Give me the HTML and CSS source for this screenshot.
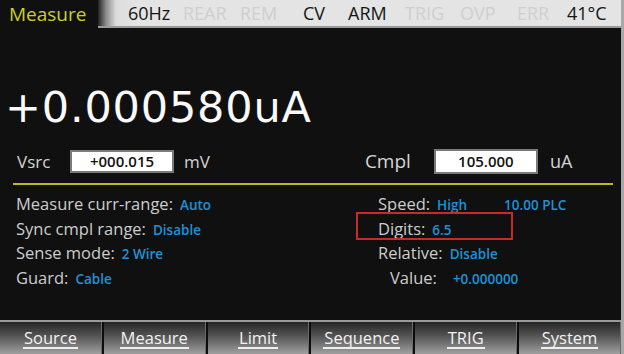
FILE: index.html
```html
<!DOCTYPE html>
<html lang="en">
<head>
    <meta charset="UTF-8">
    <title>Measure</title>
    <link rel="stylesheet" href="styles.css">
</head>
<body>
  <div class="screen">

    <header class="topbar">
      <div class="mode">Measure</div>
      <div class="status">
        <span class="flag on hz">60Hz</span>
        <span class="flag off rear">REAR</span>
        <span class="flag off rem">REM</span>
        <span class="flag on cv">CV</span>
        <span class="flag on arm">ARM</span>
        <span class="flag off trig">TRIG</span>
        <span class="flag off ovp">OVP</span>
        <span class="flag off err">ERR</span>
        <span class="flag on temp">41°C</span>
      </div>
    </header>

    <div class="reading">+0.000580uA</div>

    <div class="setpoints">
      <div class="setpoint">
        <span class="sp-label">Vsrc</span>
        <span class="sp-box">+000.015</span>
        <span class="sp-unit">mV</span>
      </div>
      <div class="setpoint cmpl">
        <span class="sp-label">Cmpl</span>
        <span class="sp-box">105.000</span>
        <span class="sp-unit">uA</span>
      </div>
    </div>

    <div class="divider"></div>

    <div class="info">
      <div class="info-col">
        <div class="row"><span class="key">Measure curr-range:</span><span class="val">Auto</span></div>
        <div class="row"><span class="key">Sync cmpl range:</span><span class="val">Disable</span></div>
        <div class="row"><span class="key">Sense mode:</span><span class="val">2 Wire</span></div>
        <div class="row"><span class="key">Guard:</span><span class="val">Cable</span></div>
      </div>
      <div class="info-col right">
        <div class="row"><span class="key">Speed:</span><span class="val">High</span><span class="val plc">10.00 PLC</span></div>
        <div class="row marked"><span class="key">Digits:</span><span class="val">6.5</span></div>
        <div class="row"><span class="key">Relative:</span><span class="val">Disable</span></div>
        <div class="row indent"><span class="key">Value:</span><span class="val">+0.000000</span></div>
      </div>
    </div>

    <nav class="softkeys">
      <div class="key-btn"><span>Source</span></div>
      <div class="key-btn"><span>Measure</span></div>
      <div class="key-btn"><span>Limit</span></div>
      <div class="key-btn"><span>Sequence</span></div>
      <div class="key-btn"><span>TRIG</span></div>
      <div class="key-btn"><span>System</span></div>
    </nav>

  </div>
</body>
</html>
```

FILE: styles.css
```css
body {
    margin: 0;
    background: #111;
    font-family: "Open Sans", sans-serif;
}

.screen {
    width: 621px;
    height: 354px;
    background: #101010;
    border-right: 3px solid #a8a8a8;
    display: flex;
    flex-direction: column;
    overflow: hidden;
}

/* top status strip */
.topbar {
    display: flex;
    height: 29px;
    flex-shrink: 0;
}

.mode {
    width: 89px;
    padding-left: 9px;
    color: #c9cf2e;
    font-size: 19px;
    line-height: 29px;
}

.status {
    flex: 1;
    position: relative;
    height: 26px;
    background: linear-gradient(to right, #222 0px, #8a8a8a 8px, #dcdcdc 18px, #e4e4e4 40px);
    border-bottom: 2px solid #9a9a9a;
    font-size: 18px;
    line-height: 28px;
}

.flag {
    position: absolute;
    top: -1px;
}
.flag.on { color: #151515; }
.flag.off { color: #cfcfcf; }

.hz { left: 30px; }
.rear { left: 85px; }
.rem { left: 142px; }
.cv { left: 205px; }
.arm { left: 250px; }
.trig { left: 307px; }
.ovp { left: 362px; }
.err { left: 419px; }
.temp { left: 469px; }

/* main reading */
.reading {
    margin-top: 54px;
    padding-left: 5px;
    color: #fafafa;
    font-family: "DejaVu Sans", sans-serif;
    font-size: 43px;
    line-height: 48px;
    letter-spacing: 0.8px;
}

.setpoints {
    display: flex;
    margin-top: 18px;
    height: 24px;
}

.setpoint {
    display: flex;
    align-items: center;
    color: #d4d4d4;
    font-size: 17px;
}

.setpoint .sp-label {
    width: 53px;
    padding-left: 17px;
}

.sp-box {
    box-sizing: border-box;
    width: 104px;
    height: 23px;
    background: #fff;
    border: 2px solid #7a7a7a;
    color: #111;
    font-size: 15px;
    font-weight: 600;
    text-align: center;
    line-height: 19px;
}

.sp-unit {
    margin-left: 10px;
}

.setpoint.cmpl {
    margin-left: 155px;
    font-size: 19px;
}
.setpoint.cmpl .sp-label {
    width: 69px;
    padding-left: 0;
}
.setpoint.cmpl .sp-box {
    height: 25px;
    line-height: 21px;
}
.setpoint.cmpl .sp-unit {
    margin-left: 12px;
    font-size: 18px;
}

.divider {
    margin: 10px 8px 0 13px;
    height: 2px;
    background: #b9bc1c;
}

/* settings list */
.info {
    display: flex;
    margin-top: 7px;
    flex: 1;
}

.info-col {
    display: flex;
    flex-direction: column;
    padding-left: 16px;
    width: 346px;
    flex-shrink: 0;
    box-sizing: border-box;
}

.info-col.right {
    padding-left: 32px;
    width: auto;
    flex: 1;
}

.row {
    display: flex;
    align-items: baseline;
    height: 24.5px;
    line-height: 24px;
    font-size: 16.5px;
    color: #cdcdcd;
}

.val {
    margin-left: 7px;
    color: #1c93d6;
    font-size: 13.5px;
    font-weight: 600;
}

.val.plc {
    margin-left: 37px;
}

.row.marked {
    position: relative;
}
.row.marked::before {
    content: "";
    position: absolute;
    left: -22px;
    top: -5px;
    width: 153px;
    height: 24px;
    border: 2px solid #c82a2a;
}

.row.indent {
    padding-left: 12px;
}
.row.indent .val {
    margin-left: 16px;
}

/* soft keys */
.softkeys {
    display: flex;
    height: 32px;
    border-top: 2px solid #9a9a9a;
    background: #111;
    flex-shrink: 0;
}

.key-btn {
    flex: 1;
    display: flex;
    justify-content: center;
    align-items: center;
    background: linear-gradient(to bottom, #262626 0%, #555 45%, #a0a0a0 100%);
    border-left: 2px solid #0c0c0c;
    border-right: 1px solid #6a6a6a;
    color: #f2f2f2;
    font-size: 16.5px;
}

.key-btn:first-child {
    border-left: none;
}

.key-btn span {
    border-bottom: 2px solid #eee;
    line-height: 19px;
    padding: 0 1px;
}
```
